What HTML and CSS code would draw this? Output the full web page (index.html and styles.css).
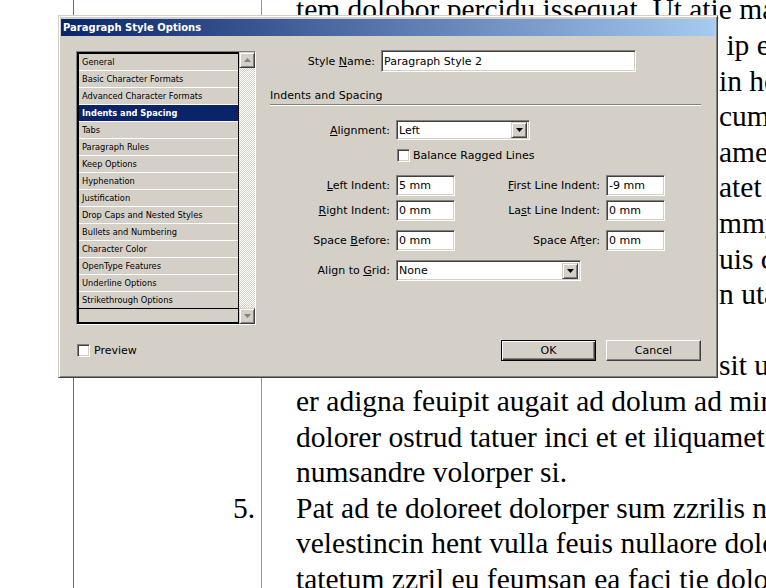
FILE: index.html
```html
<!DOCTYPE html>
<html>
	<head>
		<meta charset="utf-8" />
		<title>Paragraph Style Options</title>
		<link rel="stylesheet" href="styles.css">
	</head>
	<body>
		<div class="doc">
			<div class="row"><div class="mg"></div><div class="num"></div><div class="txt">tem dolobor percidu issequat. Ut atie magna</div></div>
			<div class="row"><div class="mg"></div><div class="num"></div><div class="txt tail">&nbsp;ip exeriure</div></div>
			<div class="row"><div class="mg"></div><div class="num"></div><div class="txt tail">in hent</div></div>
			<div class="row"><div class="mg"></div><div class="num"></div><div class="txt tail">cum dolor</div></div>
			<div class="row"><div class="mg"></div><div class="num"></div><div class="txt tail">amet ut</div></div>
			<div class="row"><div class="mg"></div><div class="num"></div><div class="txt tail">atet nos</div></div>
			<div class="row"><div class="mg"></div><div class="num"></div><div class="txt tail">mmy nulla</div></div>
			<div class="row"><div class="mg"></div><div class="num"></div><div class="txt tail">uis cor</div></div>
			<div class="row"><div class="mg"></div><div class="num"></div><div class="txt tail">n utat</div></div>
			<div class="row"><div class="mg"></div><div class="num"></div><div class="txt"></div></div>
			<div class="row"><div class="mg"></div><div class="num"></div><div class="txt tail">sit ut</div></div>
			<div class="row"><div class="mg"></div><div class="num"></div><div class="txt">er adigna feuipit augait ad dolum ad minim</div></div>
			<div class="row"><div class="mg"></div><div class="num"></div><div class="txt">dolorer ostrud tatuer inci et et iliquamet</div></div>
			<div class="row"><div class="mg"></div><div class="num"></div><div class="txt">numsandre volorper si.</div></div>
			<div class="row"><div class="mg"></div><div class="num">5.</div><div class="txt">Pat ad te doloreet dolorper sum zzrilis nim</div></div>
			<div class="row"><div class="mg"></div><div class="num"></div><div class="txt">velestincin hent vulla feuis nullaore dolor</div></div>
			<div class="row"><div class="mg"></div><div class="num"></div><div class="txt">tatetum zzril eu feumsan ea faci tie dolore</div></div>
		</div>

		<div class="dlg">
			<div class="title">Paragraph Style Options</div>
			<div class="body">
				<div class="left">
					<div class="list">
						<div class="items">
							<div class="item">General</div>
							<div class="item">Basic Character Formats</div>
							<div class="item">Advanced Character Formats</div>
							<div class="item on">Indents and Spacing</div>
							<div class="item">Tabs</div>
							<div class="item">Paragraph Rules</div>
							<div class="item">Keep Options</div>
							<div class="item">Hyphenation</div>
							<div class="item">Justification</div>
							<div class="item">Drop Caps and Nested Styles</div>
							<div class="item">Bullets and Numbering</div>
							<div class="item">Character Color</div>
							<div class="item">OpenType Features</div>
							<div class="item">Underline Options</div>
							<div class="item">Strikethrough Options</div>
						</div>
						<div class="sb">
							<div class="sbtn"><svg width="7" height="4" viewBox="0 0 7 4"><polygon points="3.5,0 7,4 0,4" fill="#808080"/></svg></div>
							<div class="track"></div>
							<div class="sbtn"><svg width="7" height="4" viewBox="0 0 7 4"><polygon points="0,0 7,0 3.5,4" fill="#808080"/></svg></div>
						</div>
					</div>
					<div class="prev"><div class="cb"></div><span>Preview</span></div>
				</div>

				<div class="right">
					<div class="name">
						<div class="nlbl">Style <u>N</u>ame:</div>
						<div class="fld wname">Paragraph Style 2</div>
					</div>
					<div class="sect">Indents and Spacing</div>

					<div class="frow first">
						<div class="lbl"><u>A</u>lignment:</div>
						<div class="fld sel walign"><span>Left</span><div class="arr"><svg width="7" height="4" viewBox="0 0 7 4"><polygon points="0,0 7,0 3.5,4" fill="#000"/></svg></div></div>
					</div>
					<div class="chk"><div class="cb"></div><span>Balance Ragged Lines</span></div>

					<div class="irow top">
						<div class="lbl"><u>L</u>eft Indent:</div>
						<div class="fld">5 mm</div>
						<div class="lbl"><u>F</u>irst Line Indent:</div>
						<div class="fld">-9 mm</div>
					</div>
					<div class="irow">
						<div class="lbl"><u>R</u>ight Indent:</div>
						<div class="fld">0 mm</div>
						<div class="lbl">La<u>s</u>t Line Indent:</div>
						<div class="fld">0 mm</div>
					</div>
					<div class="irow sp">
						<div class="lbl">Space <u>B</u>efore:</div>
						<div class="fld">0 mm</div>
						<div class="lbl">Space Af<u>t</u>er:</div>
						<div class="fld">0 mm</div>
					</div>

					<div class="frow grid">
						<div class="lbl">Align to <u>G</u>rid:</div>
						<div class="fld sel wgrid"><span>None</span><div class="arr"><svg width="7" height="4" viewBox="0 0 7 4"><polygon points="0,0 7,0 3.5,4" fill="#000"/></svg></div></div>
					</div>

					<div class="btns">
						<div class="btn def">OK</div>
						<div class="btn">Cancel</div>
					</div>
				</div>
			</div>
		</div>
	</body>
</html>
```

FILE: styles.css
```css
*{
	margin: 0;
	padding: 0;
	box-sizing: border-box;
}
body{
	width: 766px;
	height: 588px;
	overflow: hidden;
	background: #fff;
	position: relative;
}

/* document behind the dialog */
.doc{
	margin-top: -7.6px;
	font-family: "Liberation Serif", serif;
	font-size: 29.5px;
	color: #000;
}
.row{
	display: grid;
	grid-template-columns: 73px 189px 1fr;
	height: 35.6px;
	line-height: 35.6px;
	white-space: nowrap;
}
.num{
	border-left: 1px solid #9446dc;
	border-right: 1px solid #6a9cf0;
	text-align: right;
	padding-right: 6px;
}
.txt{
	padding-left: 34px;
	overflow: hidden;
}
.tail{
	padding-left: 457px;
}

/* dialog */
.dlg{
	position: absolute;
	left: 58px;
	top: 15px;
	width: 660px;
	height: 363px;
	background: #d4d0c8;
	border: 1px solid;
	border-color: #d4d0c8 #404040 #404040 #d4d0c8;
	box-shadow: inset 1px 1px #fff, inset -1px -1px #808080;
	padding: 3px 2px 2px 2px;
	display: flex;
	flex-direction: column;
	font-family: "DejaVu Sans", sans-serif;
	font-size: 11px;
	color: #000;
}
.title{
	height: 17px;
	line-height: 17px;
	padding-left: 2px;
	background: linear-gradient(to right, #0a246a, #a6caf0);
	color: #fff;
	font-weight: bold;
	font-size: 10px;
}
.body{
	flex: 1;
	display: flex;
	gap: 14px;
	padding: 14px 14px 0 15px;
}
.left{
	width: 180px;
}
.list{
	margin-top: 1px;
	height: 274px;
	display: flex;
	border: 1px solid;
	border-color: #808080 #fff #fff #808080;
}
.items{
	flex: 1;
	border: 2px solid #000;
	border-right-width: 1px;
	background: #d4d0c8;
}
.item{
	height: 17px;
	line-height: 16px;
	padding-left: 3px;
	border-bottom: 1px solid #fff;
	font-family: "DejaVu Sans Condensed", "Liberation Sans", sans-serif;
	font-size: 9.2px;
	white-space: nowrap;
}
.item:last-child{
	border-bottom-color: #000;
}
.item.on{
	background: #0a246a;
	color: #fff;
	font-weight: bold;
}
.sb{
	width: 16px;
	display: flex;
	flex-direction: column;
}
.sbtn{
	height: 16px;
	background: #d4d0c8;
	border: 1px solid;
	border-color: #d4d0c8 #404040 #404040 #d4d0c8;
	box-shadow: inset 1px 1px #fff, inset -1px -1px #808080;
	display: flex;
	align-items: center;
	justify-content: center;
}
.track{
	flex: 1;
	background: repeating-conic-gradient(#fff 0 25%, #d4d0c8 0 50%) 0 0/2px 2px;
}
.prev{
	display: flex;
	align-items: center;
	gap: 4px;
	margin: 19px 0 0 1px;
	line-height: 13px;
}
.cb{
	width: 13px;
	height: 13px;
	background: #fff;
	border: 1px solid;
	border-color: #808080 #fff #fff #808080;
	box-shadow: inset 1px 1px #404040, inset -1px -1px #d4d0c8;
}

.right{
	width: 431px;
	display: flex;
	flex-direction: column;
}
.name{
	display: flex;
	align-items: center;
	gap: 6px;
	height: 22px;
}
.nlbl{
	width: 105px;
	text-align: right;
}
.fld{
	height: 21px;
	background: #fff;
	border: 1px solid;
	border-color: #808080 #fff #fff #808080;
	box-shadow: inset 1px 1px #404040, inset -1px -1px #d4d0c8;
	padding-left: 2px;
	display: flex;
	align-items: center;
	white-space: nowrap;
}
.wname{
	width: 255px;
	height: 22px;
}
.sect{
	margin-top: 17px;
	line-height: 14px;
	padding-bottom: 1px;
	border-bottom: 1px solid #808080;
	box-shadow: 0 1px #fff;
}
.frow{
	display: flex;
	align-items: center;
}
.frow.first{
	margin-top: 15px;
}
.frow.grid{
	margin-top: 9px;
}
.lbl{
	width: 120px;
	margin-right: 6px;
	text-align: right;
	white-space: nowrap;
}
.sel{
	justify-content: space-between;
	padding-right: 2px;
}
.walign{
	width: 134px;
	height: 20px;
}
.wgrid{
	width: 185px;
}
.arr{
	width: 16px;
	height: 16px;
	background: #d4d0c8;
	border: 1px solid;
	border-color: #d4d0c8 #404040 #404040 #d4d0c8;
	box-shadow: inset 1px 1px #fff, inset -1px -1px #808080;
	display: flex;
	align-items: center;
	justify-content: center;
}
.chk{
	display: flex;
	align-items: center;
	gap: 3px;
	margin-top: 9px;
	padding-left: 127px;
	line-height: 13px;
}
.irow{
	display: grid;
	grid-template-columns: 120px 59px 139px 59px;
	column-gap: 6px;
	align-items: center;
	height: 21px;
	margin-top: 4px;
}
.irow .lbl{
	width: auto;
	margin-right: 0;
}
.irow.top{
	margin-top: 13px;
}
.irow.sp{
	margin-top: 9px;
}
.btns{
	margin-top: auto;
	margin-bottom: 14px;
	display: flex;
	justify-content: flex-end;
	gap: 10px;
}
.btn{
	width: 95px;
	height: 21px;
	background: #d4d0c8;
	border: 1px solid;
	border-color: #fff #404040 #404040 #fff;
	box-shadow: inset -1px -1px #808080;
	display: flex;
	align-items: center;
	justify-content: center;
}
.btn.def{
	border-color: #000;
	box-shadow: inset 1px 1px #fff, inset -1px -1px #404040, inset -2px -2px #808080;
}
```
